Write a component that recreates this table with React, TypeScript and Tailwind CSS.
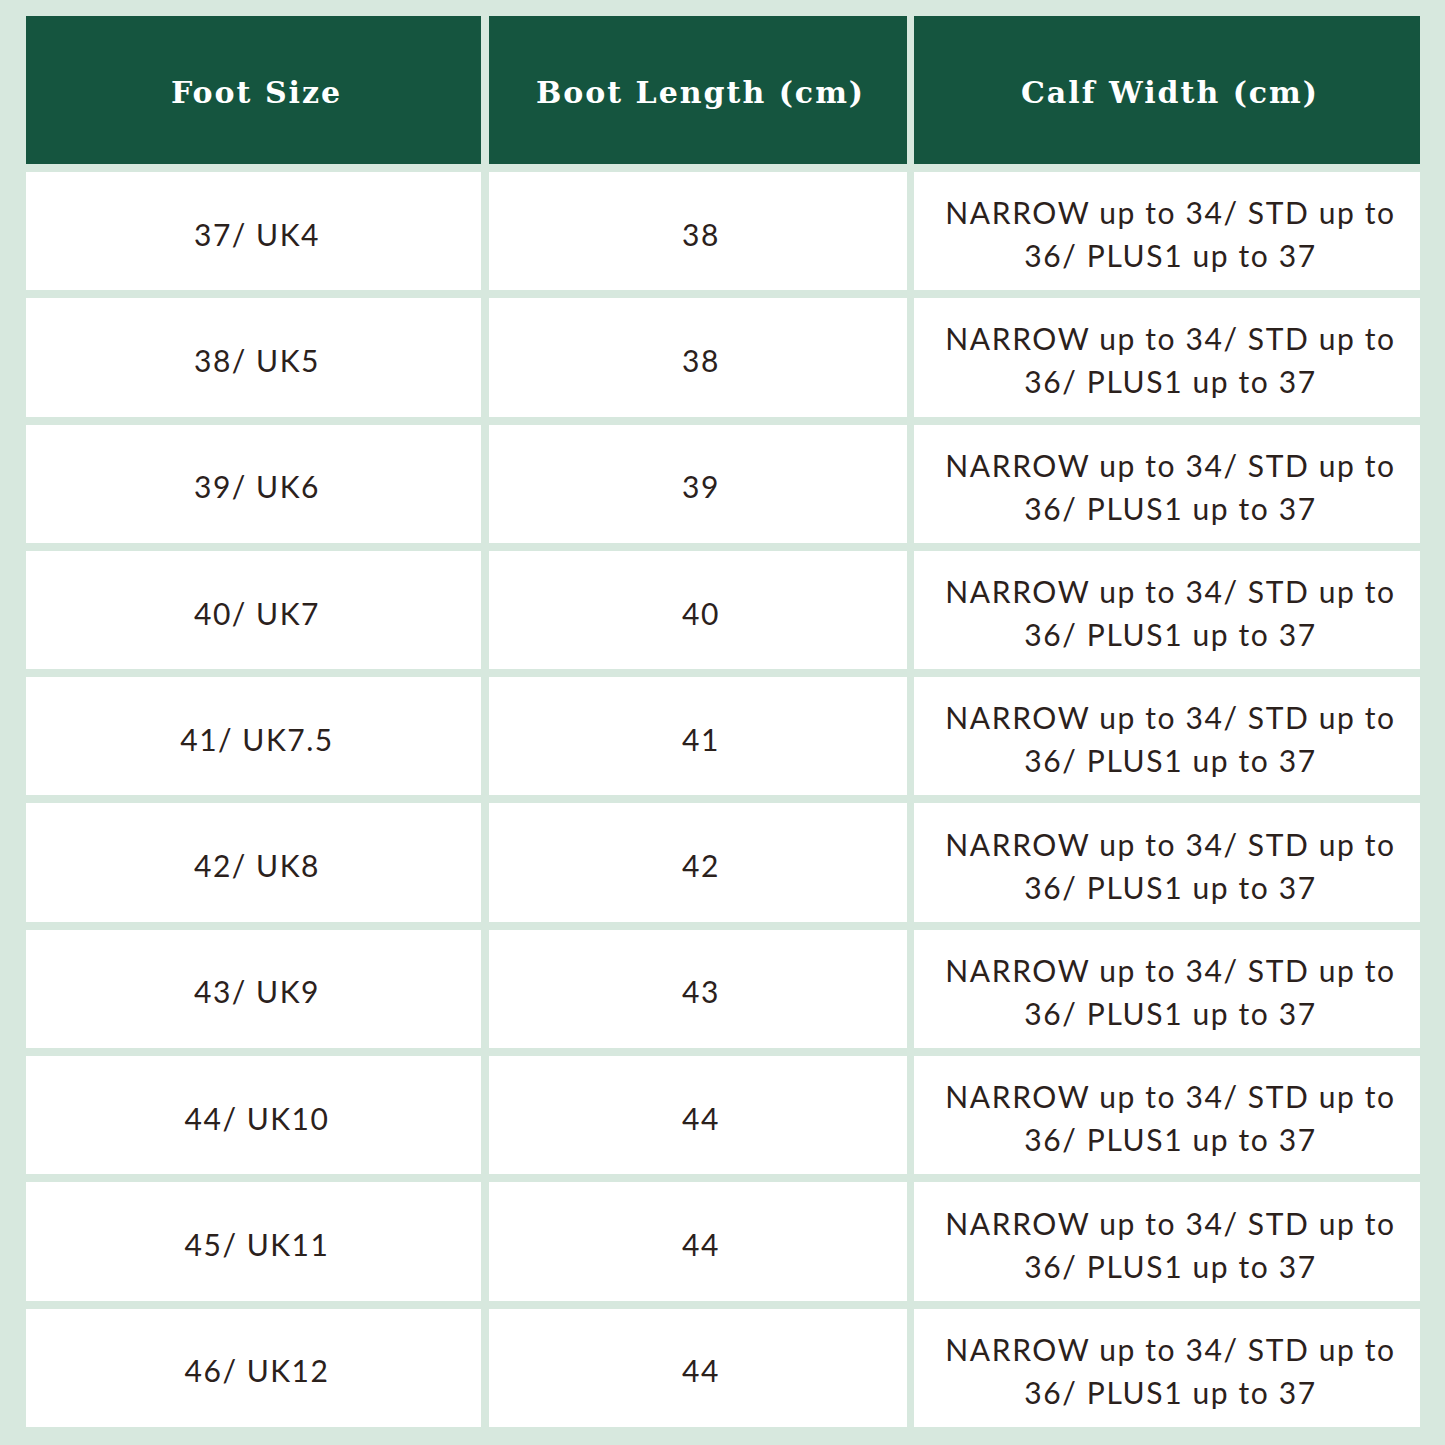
const rows = [
  ['37/ UK4', '38'],
  ['38/ UK5', '38'],
  ['39/ UK6', '39'],
  ['40/ UK7', '40'],
  ['41/ UK7.5', '41'],
  ['42/ UK8', '42'],
  ['43/ UK9', '43'],
  ['44/ UK10', '44'],
  ['45/ UK11', '44'],
  ['46/ UK12', '44'],
];

const headers = ['Foot Size', 'Boot Length (cm)', 'Calf Width (cm)'];

export default function App() {
  return (
    <div className="w-[1445px] h-[1445px] bg-[#d7e8de] pt-4 pl-[26px]">
      <div className="grid w-[1394px] grid-cols-[455px_418px_506px] gap-x-[7.5px] gap-y-2">
        {headers.map((h) => (
          <div
            key={h}
            className="h-[148px] bg-[#15553f] flex items-center justify-center pl-[6px] pt-[5px] text-white text-[30px] font-bold tracking-[2px] font-['DejaVu_Serif',serif]"
          >
            {h}
          </div>
        ))}
        {rows.map(([foot, boot]) => (
          <>
            <div
              key={foot + 'a'}
              className="h-[118.3px] bg-white flex items-center justify-center pl-[7px] pt-[6px] text-[#2b211c] text-[30px] tracking-[1.5px] font-['Lato',sans-serif]"
            >
              {foot}
            </div>
            <div
              key={foot + 'b'}
              className="h-[118.3px] bg-white flex items-center justify-center pl-[7px] pt-[6px] text-[#2b211c] text-[30px] tracking-[1.5px] font-['Lato',sans-serif]"
            >
              {boot}
            </div>
            <div
              key={foot + 'c'}
              className="h-[118.3px] bg-white flex items-center justify-center text-center pl-[18px] pr-[11px] pt-[6px] text-[#2b211c] text-[30px] leading-[43px] tracking-[1.6px] font-['Lato',sans-serif]"
            >
              NARROW up to 34/ STD up to 36/ PLUS1 up to 37
            </div>
          </>
        ))}
      </div>
    </div>
  );
}
